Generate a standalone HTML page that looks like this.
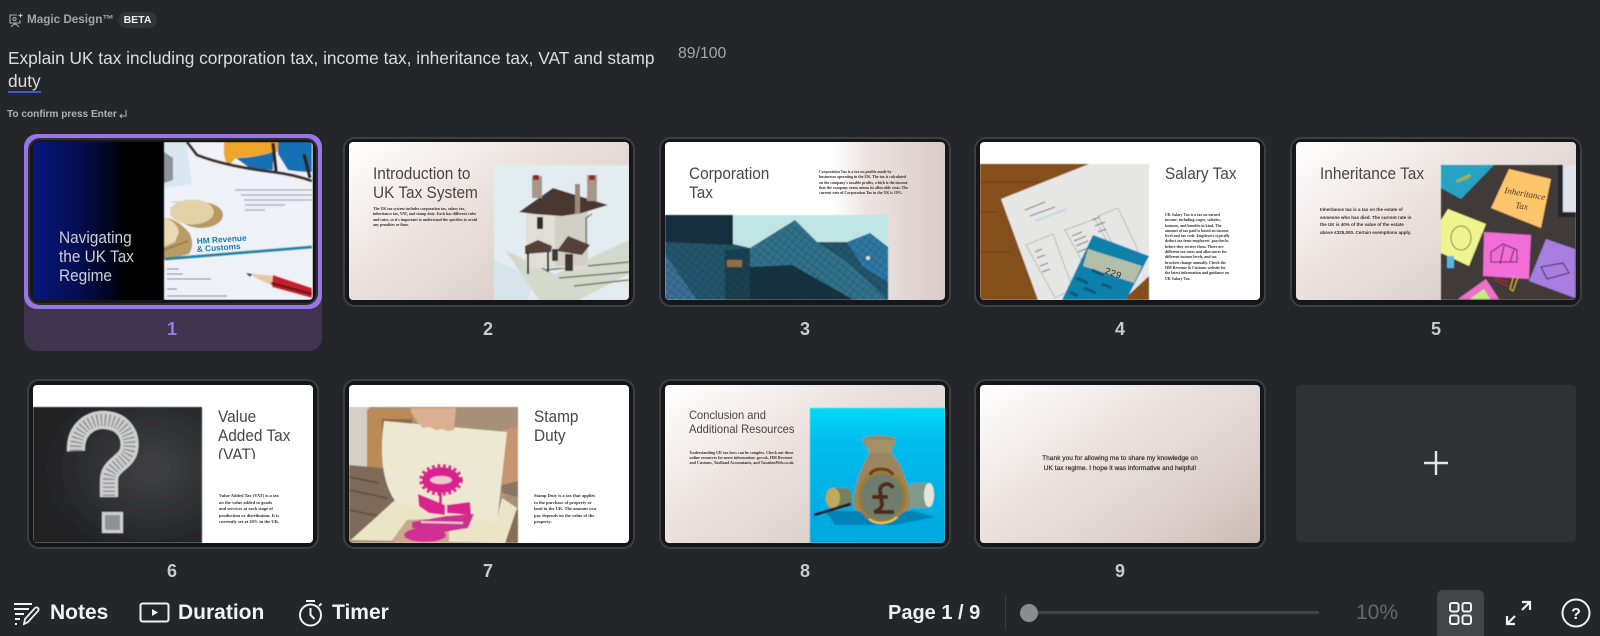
<!DOCTYPE html>
<html lang="en"><head><meta charset="utf-8"><title>Magic Design</title>
<style>
html,body{margin:0;padding:0;background:#252629;width:1600px;height:636px;overflow:hidden}
body{position:relative;font-family:"Liberation Sans",sans-serif;color:#fff}
.a{position:absolute;white-space:nowrap}
.f{position:absolute;width:292px;height:170px;border:2px solid #3e3f42;border-radius:12px;box-sizing:border-box;background:#16171a}
.s{position:absolute;width:280px;height:158px;border-radius:4px;overflow:hidden;background:#fff;color:#4b4545}
.s svg{position:absolute;left:0;top:0;width:280px;height:158px}
.g{background:linear-gradient(145deg,#fff 0%,#eee6e3 35%,#dccfcb 75%,#cdbcb5 100%)}
.t{position:absolute;font-size:16.2px;line-height:18.8px;white-space:nowrap;color:#4b4545;transform:scaleX(.95);transform-origin:left top}
.b{position:absolute;font-family:"Liberation Serif",serif;font-weight:bold;font-size:3.9px;line-height:5.3px;white-space:nowrap;color:#352f2f}
.n{position:absolute;width:40px;text-align:center;font-weight:bold;font-size:18px;line-height:20px;color:#c9cacc}
.tb{font-weight:bold;font-size:21px;line-height:26px;color:#f2f2f3;top:600px}
</style></head><body>

<svg class="a" style="left:8px;top:13px" width="16" height="16" viewBox="0 0 16 16" fill="none" stroke="#a8a9ac" stroke-width="1.1"><path d="M9 2H2v8h10V7M3 14l4-4 4 4M7 10v2"/><circle cx="6.500" cy="6" r="1.600"/><path d="M12.500 0.500v4M10.500 2.500h4" stroke="#c4c5c8"/></svg>
<div class="a" style="left:27px;top:12px;font-size:11.700px;line-height:16px;font-weight:bold;color:#a3a4a7">Magic Design™</div>
<div class="a" style="left:118px;top:12px;width:39px;height:16px;border-radius:8px;background:#333438;text-align:center;font-size:10.500px;line-height:16px;font-weight:bold;color:#eceded">BETA</div>
<div class="a" style="left:8px;top:47px;font-size:17.300px;line-height:23px;color:#dcdcdd">Explain UK tax including corporation tax, income tax, inheritance tax, VAT and stamp<br><span style="border-bottom:2px solid #3d5bd0">duty</span></div>
<div class="a" style="left:678px;top:45px;font-size:15.800px;line-height:18px;color:#a5a6a8">89/100</div>
<div class="a" style="left:7px;top:108px;font-size:10.100px;line-height:14px;font-weight:bold;color:#b0b1b3">To confirm press Enter</div>
<svg class="a" style="left:118px;top:109px" width="10" height="10" viewBox="0 0 10 10" fill="none" stroke="#b0b1b3" stroke-width="1"><path d="M8 1v6H2M4 5L2 7l2 2"/></svg>

<!-- selected panel -->
<div class="a" style="left:24px;top:134px;width:298px;height:217px;border-radius:13px;background:#3f3350"></div>
<div class="a" style="left:24px;top:134px;width:298px;height:175px;border-radius:13px;background:#9a76e4"></div>
<div class="f" style="left:28px;top:138px;width:290px;height:167px;background:#16171a;border-color:#2e2f33"></div>

<div class="f" style="left:343px;top:136.500px"></div>
<div class="f" style="left:659px;top:136.500px"></div>
<div class="f" style="left:974px;top:136.500px"></div>
<div class="f" style="left:1290px;top:136.500px"></div>
<div class="f" style="left:27px;top:379px"></div>
<div class="f" style="left:343px;top:379px"></div>
<div class="f" style="left:659px;top:379px"></div>
<div class="f" style="left:974px;top:379px"></div>

<!-- Slide 1 -->
<div class="s" style="left:33px;top:142px;background:#000">
<svg viewBox="0 0 280 158"><defs><linearGradient id="g1" x1="0" x2="1" y1="0" y2="0"><stop offset="0" stop-color="#07167c"/><stop offset=".35" stop-color="#050e52"/><stop offset=".72" stop-color="#000"/></linearGradient><filter id="bl"><feGaussianBlur stdDeviation=".5"/></filter></defs>
<rect width="131" height="158" fill="url(#g1)"/>
<g filter="url(#bl)">
<rect x="131" width="149" height="158" fill="#eef1f8"/>
<path d="M131 0h22l6 42-28 4z" fill="#d9e8f0"/><path d="M131 10l9 6v22l-9 3z" fill="#8f9299"/>
<path d="M191 0h74c-10 8-30 14-62 16l-8 8c-5-8-4-16-4-24z" fill="#efa52c"/>
<path d="M203 16c14 0 28-3 37-6v18l-22-1zM245 0h34v30c-10 0-18-1-24-2l-10-16z" fill="#1470b4"/>
<path d="M154 0l10 13c20 8 50 14 76 17 16 2 28 5 39 9" fill="none" stroke="#3a302c" stroke-width="3"/>
<path d="M240 1l3 28M271 12l6 24" stroke="#2e2624" stroke-width="3.500"/>
<path d="M202 48h77M208 53h71M211 58h68M212 63h40M212 68h20" stroke="#a4a8b0" stroke-width="1.200"/>
<path d="M137 66h30M139 60h22" stroke="#b8bcc4" stroke-width="1"/>
<ellipse cx="168" cy="73" rx="22" ry="13" fill="#b7995e"/><ellipse cx="159" cy="70" rx="22" ry="12.500" fill="#e2d2a6"/>
<path d="M131 76c10 0 20 8 26 16 3 8 3 14-1 20l-25 6z" fill="#b99c62"/><path d="M131 76c8 1 14 8 15 14l-4 10-11 5z" fill="#e8dab2"/><path d="M131 108l24-9" stroke="#8f7546" stroke-width="1.300"/>
<path d="M132 117l147-12" stroke="#12889f" stroke-width="3"/>
<path d="M213 131l27 3 0 10z" fill="#e8c8a6"/><path d="M213 131l6 1-2 3z" fill="#333"/>
<path d="M240 133l39 13v10l-40-11z" fill="#c71d29"/><path d="M238 141l41 11" stroke="#5a1218" stroke-width="2"/>
<path d="M134 127h12M134 132h16M134 137h44M134 147h10M134 154h60" stroke="#70747d" stroke-width="1.100"/>
</g>
<text x="164" y="102" font-family="Liberation Sans" font-weight="bold" font-size="8.300" fill="#1a7ba6" transform="rotate(-4 164 102)">HM Revenue</text>
<text x="164" y="110" font-family="Liberation Sans" font-weight="bold" font-size="8.300" fill="#1a7ba6" transform="rotate(-4 164 110)">&amp; Customs</text>
</svg>
<div class="t" style="left:26px;top:87px;color:#cdd0d8">Navigating<br>the UK Tax<br>Regime</div>
</div>

<!-- Slide 2 -->
<div class="s g" style="left:349px;top:142px">
<svg viewBox="0 0 280 158"><g filter="url(#bl)">
<rect x="145" y="23" width="135" height="135" fill="#e3edf1"/>
<path d="M145 118l40 18-6 22h-34z" fill="#d6e5ea"/>
<path d="M156 108l50 24 74-34v34l-50 26h-40z" fill="#d4dacb"/><path d="M196 128l84-8M210 136l70-6M225 144l55-6M180 118l20 12" stroke="#6f7a63" stroke-width="1.600"/>
<rect x="177" y="66" width="62" height="60" fill="#e0ded6"/><rect x="206" y="70" width="33" height="54" fill="#d2cfc7"/>
<path d="M170 70l34-24 55 17-26 8-20 3-28-2z" fill="#4a3833"/>
<rect x="183" y="34" width="10" height="22" fill="#a9968a"/><rect x="184" y="33" width="6" height="5" fill="#8d2c28"/>
<rect x="238" y="33" width="10" height="26" fill="#a9968a"/><rect x="240" y="33" width="6" height="5" fill="#8d2c28"/>
<rect x="226" y="42" width="5" height="30" fill="#9a8a7c"/>
<path d="M176 104l13-6 14 6-1 6-26 2z" fill="#54403a"/><path d="M179 110v22M199 110v19" stroke="#222" stroke-width="2"/>
<path d="M208 109l11-15 22 9-8 10z" fill="#54403a"/>
<rect x="216" y="112" width="8" height="17" fill="#3c3632"/><rect x="203" y="107" width="6" height="12" fill="#3b3b38"/>
<rect x="188" y="75" width="6" height="12" fill="#2f2f2c"/><path d="M243 72l-6 4v26" stroke="#222" fill="none"/>
</g></svg>
<div class="t" style="left:24px;top:23px">Introduction to<br>UK Tax System</div>
<div class="b" style="left:24px;top:65px">The UK tax system includes corporation tax, salary tax,<br>inheritance tax, VAT, and stamp duty. Each has different rules<br>and rates, so it's important to understand the specifics to avoid<br>any penalties or fines.</div>
</div>

<!-- Slide 3 -->
<div class="s" style="left:665px;top:142px;background:linear-gradient(90deg,#fff 0%,#fff 60%,#ece3e0 72%,#d9cbc7 100%)">
<svg viewBox="0 0 280 158"><defs><pattern id="gr" width="6" height="6" patternUnits="userSpaceOnUse" patternTransform="rotate(38)"><path d="M0 0h6M0 0v6" stroke="#0b2230" stroke-width=".9"/></pattern></defs><g filter="url(#bl)">
<rect y="73" width="223" height="85" fill="#23566c"/>
<path d="M0 73h68v30L0 100z" fill="#172f3d"/>
<path d="M0 112l32 46H0z" fill="#3a6f95"/>
<path d="M85 106l45-28 22 22 30 20 41 38H85z" fill="#31728a"/>
<path d="M85 125l42-2 62 35H85z" fill="#143140"/>
<path d="M182 100l23-9 18 14v35l-25-15z" fill="#2f78a4"/>
<path d="M60 108l25-2v52H60z" fill="#1c3f50"/>
<rect y="73" width="223" height="85" fill="url(#gr)" opacity=".45"/>
<path d="M68 73h155v32l-18-14-23 9-30 0-22-22-45 28-17-4z" fill="#bfe6e4"/>
<circle cx="203" cy="116" r="2" fill="#e8dcc0"/><rect x="62" y="118" width="15" height="7" fill="#b07c42" opacity=".8"/>
</g></svg>
<div class="t" style="left:24px;top:23px">Corporation<br>Tax</div>
<div class="b" style="left:154px;top:28px">Corporation Tax is a tax on profits made by<br>businesses operating in the UK. The tax is calculated<br>on the company's taxable profits, which is the income<br>that the company earns minus its allowable costs. The<br>current rate of Corporation Tax in the UK is 19%.</div>
</div>

<!-- Slide 4 -->
<div class="s" style="left:980px;top:142px">
<svg viewBox="0 0 280 158"><g filter="url(#bl)">
<rect y="22" width="169" height="136" fill="#85501f"/>
<path d="M0 40h60M0 70h18M0 110h30" stroke="#6c3c14" stroke-width="1.500" opacity=".6"/>
<path d="M21 57l88-35h60v112l-26 24H58z" fill="#e6e6e5"/>
<path d="M45 68l20-8M50 74l25-9" stroke="#6d8088" stroke-width="1"/><path d="M55 79l32-12" stroke="#b6dbe6" stroke-width="2"/>
<path d="M46 103l27-11 20 55-18 9zM85 88l30-11 30 56-28 14zM118 74l20-8 20 42-17 10z" fill="none" stroke="#5f6366" stroke-width=".6" stroke-dasharray="1.500 1"/>
<path d="M92 94l10-4M94 99l12-5M96 104l12-5M98 110l10-4M112 78l8-3M115 84l10-4M118 90l8-3M55 110l7-3M57 116l8-3M60 124l8-3M62 130l8-3" stroke="#75787a" stroke-width="1"/>
<path d="M113 93l56 21-23 44H82z" fill="#0f80ac"/>
<path d="M108 107l54 17-8 17-51-17z" fill="#b4bfa9"/>
<path d="M96 136l12 5M112 128l12 5M104 146l12 5M122 142l10 4M90 150l8 4" stroke="#0b5a78" stroke-width="3"/>
</g><text x="124" y="131" font-family="Liberation Mono" font-size="9.500" fill="#2a2f2a" transform="rotate(20 124 131)">229</text></svg>
<div class="t" style="left:185px;top:23px">Salary Tax</div>
<div class="b" style="left:185px;top:71px">UK Salary Tax is a tax on earned<br>income, including wages, salaries,<br>bonuses, and benefits in kind. The<br>amount of tax paid is based on income<br>level and tax code. Employers typically<br>deduct tax from employees' paychecks<br>before they receive them. There are<br>different tax rates and allowances for<br>different income levels, and tax<br>brackets change annually. Check the<br>HM Revenue &amp; Customs website for<br>the latest information and guidance on<br>UK Salary Tax.</div>
</div>

<!-- Slide 5 -->
<div class="s g" style="left:1296px;top:142px">
<svg viewBox="0 0 280 158"><g filter="url(#bl)">
<rect x="145" y="23" width="135" height="135" fill="#413b38"/>
<path d="M145 23h53l-33 34-20-11z" fill="#28a3c2"/>
<path d="M160 38l14-6 1 3-14 6z" fill="#a8b040"/>
<rect x="262" y="23" width="18" height="52" fill="#24262a"/><rect x="267" y="23" width="13" height="47" fill="#dfe4ea"/>
<path d="M213 27l42 10-10 49-50-20z" fill="#ffc56c"/>
<path d="M152 67l38 15-17 42-28-13V78z" fill="#eef58c"/>
<ellipse cx="165" cy="96" rx="10" ry="12" fill="none" stroke="#4a4a2a" stroke-width=".8"/>
<path d="M188 90l47 3-2 44-46-3z" fill="#f36dd8"/>
<path d="M195 110l12-8 14 6v12h-26zM208 104l-4 18M218 108l-4 12" fill="none" stroke="#3d1b38" stroke-width="1"/>
<path d="M250 97l29 10v49l-46-17z" fill="#a87ee0"/>
<path d="M245 125l22-4 6 10-22 6z" fill="none" stroke="#2c2040" stroke-width="1"/>
<path d="M190 137l13 20h-41z" fill="#ee6fc8"/><path d="M188 147l6 10h-20z" fill="#bff07a"/>
<rect x="151" y="114" width="7" height="12" fill="#52b8e8"/>
<path d="M218 133l-4 14 3 2 5-14" fill="none" stroke="#d8b020" stroke-width="1.200"/><path d="M212 140l-12-4 0 3 12 5" fill="none" stroke="#b02828" stroke-width="1"/>
</g><text x="208" y="51" font-family="Liberation Serif" font-style="italic" font-size="9" fill="#4a3a1c" transform="rotate(10 208 51)">Inheritance</text><text x="219" y="66" font-family="Liberation Serif" font-style="italic" font-size="9" fill="#4a3a1c" transform="rotate(8 219 66)">Tax</text></svg>
<div class="t" style="left:24px;top:23px">Inheritance Tax</div>
<div class="b" style="left:24px;top:64px;font-family:'Liberation Sans',sans-serif;font-size:4.500px;line-height:7.500px">Inheritance tax is a tax on the estate of<br>someone who has died. The current rate in<br>the UK is 40% of the value of the estate<br>above £325,000. Certain exemptions apply.</div>
</div>

<!-- Slide 6 -->
<div class="s" style="left:33px;top:385px">
<svg viewBox="0 0 280 158"><defs><radialGradient id="cb" cx=".7" cy=".45" r=".7"><stop offset="0" stop-color="#3f4144"/><stop offset="1" stop-color="#202123"/></radialGradient></defs><g filter="url(#bl)">
<rect y="22" width="169" height="136" fill="url(#cb)"/>
<path d="M43 66C42 44 58 34 72 35c18 1 27 15 24 30-3 13-20 15-20 30v17" fill="none" stroke="#cfcfcf" stroke-width="18"/>
<path d="M43 66C42 44 58 34 72 35c18 1 27 15 24 30-3 13-20 15-20 30v17" fill="none" stroke="#8f9092" stroke-width="12" stroke-dasharray="1.500 2.500"/>
<rect x="69" y="127" width="21" height="21" fill="#cfcfcf"/><rect x="72" y="130" width="15" height="15" fill="#909193"/>
</g></svg>
<div class="t" style="left:184.500px;top:23px;height:51px;overflow:hidden">Value<br>Added Tax<br>(VAT)</div>
<div class="b" style="left:186px;top:108px;font-size:4.500px;line-height:6.500px">Value Added Tax (VAT) is a tax<br>on the value added to goods<br>and services at each stage of<br>production or distribution. It is<br>currently set at 20% in the UK.</div>
</div>

<!-- Slide 7 -->
<div class="s" style="left:349px;top:385px">
<svg viewBox="0 0 280 158"><g filter="url(#bl)">
<rect y="22" width="169" height="136" fill="#a89078"/>
<rect y="22" width="20" height="60" fill="#d4d0c8"/><rect x="18" y="24" width="15" height="60" fill="#bb8b55"/><rect x="18" y="24" width="45" height="10" fill="#bb8b55"/>
<rect x="33" y="34" width="30" height="40" fill="#8a6a48"/>
<path d="M0 80l45 4v70H0z" fill="#7d6a58"/><path d="M0 105l38 8M0 125l30 6M0 92l30 6" stroke="#5f4e3e" stroke-width="1.500"/>
<path d="M153 45l16-3v60l-16 10z" fill="#c69470"/><path d="M153 100l16-4v16l-16-4z" fill="#8a7660"/>
<path d="M148 135l21-10v33h-21z" fill="#8a6e52"/>
<path d="M2 155l43-39 103 18 5-21 15 10-12 35z" fill="#ebe5c8"/>
<path d="M35 36l123 11-10 90C110 130 75 124 47 117 34 100 30 70 35 36z" fill="#ede8d1"/>
<path d="M62 23h45l-2 22-6 1-6-2-6 1-6-3-7 1-6-6-6-10z" fill="#dcae92"/>
<ellipse cx="92" cy="95" rx="19" ry="13" fill="#d9208e"/><ellipse cx="92" cy="95" rx="20" ry="14" fill="none" stroke="#d9208e" stroke-width="4" stroke-dasharray="3 2.500"/>
<ellipse cx="92" cy="95" rx="11" ry="4" fill="#ebc9d2"/>
<rect x="90" y="108" width="3" height="14" fill="#d9208e"/>
<path d="M69 109l27 11 0 10-16-2-10-7zM98 120l23-3 1 13-24-2z" fill="#d9208e"/>
<path d="M43 155l15-20 42-2 0 25H47z" fill="#c9a98a"/>
<path d="M63 137l34-6 28-2-6 14-30 5-26-5z" fill="#c9338f"/><path d="M72 137l42 1" stroke="#ecc8d4" stroke-width="2"/>
<ellipse cx="76" cy="150" rx="21" ry="7" fill="#d42f92"/>
</g></svg>
<div class="t" style="left:184.500px;top:23px">Stamp<br>Duty</div>
<div class="b" style="left:185px;top:108px;font-size:4.500px;line-height:6.500px">Stamp Duty is a tax that applies<br>to the purchase of property or<br>land in the UK. The amount you<br>pay depends on the value of the<br>property.</div>
</div>

<!-- Slide 8 -->
<div class="s g" style="left:665px;top:385px">
<svg viewBox="0 0 280 158"><defs><linearGradient id="bluebg" x1="0" x2="0" y1="0" y2="1"><stop offset="0" stop-color="#00dcf4"/><stop offset=".25" stop-color="#00bcec"/><stop offset="1" stop-color="#00a8e0"/></linearGradient></defs><g filter="url(#bl)">
<rect x="145" y="23" width="135" height="135" fill="url(#bluebg)"/>
<path d="M160 126h90l20 6-40 8h-60z" fill="#06689a" opacity=".6"/>
<rect x="161" y="103" width="26" height="20" rx="7" fill="#72815e"/><ellipse cx="168" cy="113" rx="7" ry="10" fill="#c2a95a"/>
<rect x="241" y="98" width="27" height="25" rx="8" fill="#7f9a88"/><ellipse cx="264" cy="110" rx="5" ry="12" fill="#e6e6d8"/>
<path d="M197 54c6-4 28-5 34 0l-5 14c12 12 20 36 19 56-10 8-44 8-56 0-2-20 8-44 16-56z" fill="#9a8560"/>
<path d="M200 55h30l-5 13h-21z" fill="#a3916a"/>
<path d="M149 130l37-11" stroke="#2a1a30" stroke-width="3"/>
<ellipse cx="217" cy="112" rx="23" ry="25" fill="#6f7c6e" stroke="#a67c1a" stroke-width="3"/>
<path d="M228 103c-3-6-12-5-13 2l2 14c0 4-4 7-8 8h20M207 112h16" fill="none" stroke="#4d2c1a" stroke-width="4"/>
<path d="M205 90c2-8 20-8 23 0" fill="none" stroke="#6a3a20" stroke-width="3"/>
<path d="M204 134c8 6 20 5 28-2" fill="none" stroke="#ffc840" stroke-width="2"/>
</g></svg>
<div class="t" style="left:24px;top:23px;font-size:12px;line-height:14px;transform:scaleX(.93)">Conclusion and<br>Additional Resources</div>
<div class="b" style="left:24.500px;top:65px;font-size:4px;line-height:5px">Understanding UK tax laws can be complex. Check out these<br>online resources for more information: gov.uk, HM Revenue<br>and Customs, TaxBand Accountants, and TaxationWeb.co.uk</div>
</div>

<!-- Slide 9 -->
<div class="s g" style="left:980px;top:385px">
<div class="b" style="left:0;top:69px;width:280px;text-align:center;font-family:'Liberation Sans',sans-serif;font-size:6.600px;line-height:9.500px;font-weight:normal;-webkit-text-stroke:.2px #352f2f">Thank you for allowing me to share my knowledge on<br>UK tax regime. I hope it was informative and helpful!</div>
</div>

<!-- Add tile -->
<div class="a" style="left:1296px;top:385px;width:280px;height:157px;border-radius:4px;background:#303134"></div>
<svg class="a" style="left:1423px;top:450px" width="26" height="26" viewBox="0 0 26 26" stroke="#e6e6e7" stroke-width="2.400"><path d="M13 1v24M1 13h24"/></svg>

<!-- numbers -->
<div class="n" style="left:152px;top:319px;color:#9a7ae6">1</div>
<div class="n" style="left:468px;top:319px">2</div>
<div class="n" style="left:785px;top:319px">3</div>
<div class="n" style="left:1100px;top:319px">4</div>
<div class="n" style="left:1416px;top:319px">5</div>
<div class="n" style="left:152px;top:561px">6</div>
<div class="n" style="left:468px;top:561px">7</div>
<div class="n" style="left:785px;top:561px">8</div>
<div class="n" style="left:1100px;top:561px">9</div>

<!-- bottom bar -->
<svg class="a" style="left:13px;top:601px" width="28" height="25" viewBox="0 0 28 25" fill="none" stroke="#f0f0f1" stroke-width="2"><path d="M1 3h18M1 8h15M2 13h9M2 18h5M2 23h2"/><path d="M11 23l1-5L22 7c2-2 5 1 3 3L15 21z" stroke-width="1.800"/></svg>
<div class="a tb" style="left:50px">Notes</div>
<svg class="a" style="left:139px;top:602px" width="31" height="22" viewBox="0 0 31 22" fill="none" stroke="#f0f0f1" stroke-width="2"><rect x="1.500" y="1.500" width="28" height="18" rx="2"/><path d="M13 7v7l6-3.500z" fill="#f0f0f1" stroke="none"/></svg>
<div class="a tb" style="left:178px">Duration</div>
<svg class="a" style="left:298px;top:599px" width="26" height="28" viewBox="0 0 26 28" fill="none" stroke="#f0f0f1" stroke-width="2"><path d="M8 2h9"/><circle cx="12.500" cy="16" r="10.500"/><path d="M12.500 9v7l4 4M21 7l2.500-2.500"/></svg>
<div class="a tb" style="left:332px">Timer</div>

<div class="a" style="left:888px;top:600px;font-size:20px;line-height:26px;font-weight:bold;color:#eeeeef">Page 1 / 9</div>
<div class="a" style="left:1005px;top:595px;width:1px;height:35px;background:#3c3d40"></div>
<div class="a" style="left:1030px;top:611px;width:289px;height:3px;background:#414245"></div>
<div class="a" style="left:1020px;top:604px;width:18px;height:18px;border-radius:50%;background:#8b8c8f"></div>
<div class="a" style="left:1356px;top:600px;font-size:21px;line-height:26px;color:#67686b">10%</div>
<div class="a" style="left:1437px;top:590px;width:47px;height:46px;border-radius:6px 6px 0 0;background:#434447"></div>
<svg class="a" style="left:1448px;top:601px" width="25" height="25" viewBox="0 0 25 25" fill="none" stroke="#f0f0f1" stroke-width="2"><rect x="2" y="2" width="8.500" height="8.500" rx="2"/><rect x="14.500" y="2" width="8.500" height="8.500" rx="2"/><rect x="2" y="14.500" width="8.500" height="8.500" rx="2"/><rect x="14.500" y="14.500" width="8.500" height="8.500" rx="2"/></svg>
<svg class="a" style="left:1505px;top:600px" width="27" height="26" viewBox="0 0 27 26" fill="none" stroke="#f0f0f1" stroke-width="2.200"><path d="M17 2h8v8M25 2l-8 8M10 24H2v-8M2 24l8-8"/></svg>
<svg class="a" style="left:1561px;top:598px" width="30" height="30" viewBox="0 0 30 30" fill="none" stroke="#f0f0f1" stroke-width="2"><circle cx="15" cy="15" r="13.500"/><text x="15" y="21" text-anchor="middle" font-family="Liberation Sans" font-weight="bold" font-size="16" fill="#f0f0f1" stroke="none">?</text></svg>
</body></html>
